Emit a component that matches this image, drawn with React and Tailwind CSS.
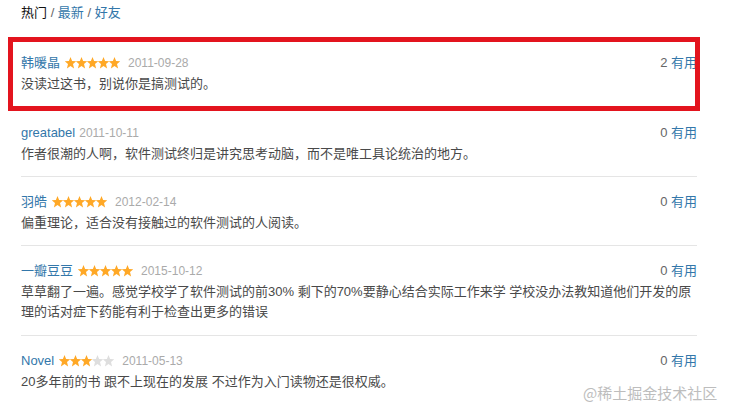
import React from 'react';

const reviews = [
  { name: '韩暖晶', stars: 5, date: '2011-09-28', text: '没读过这书，别说你是搞测试的。', useful: 2 },
  { name: 'greatabel', stars: 0, date: '2011-10-11', text: '作者很潮的人啊，软件测试终归是讲究思考动脑，而不是唯工具论统治的地方。', useful: 0 },
  { name: '羽皓', stars: 5, date: '2012-02-14', text: '偏重理论，适合没有接触过的软件测试的人阅读。', useful: 0 },
  {
    name: '一瓣豆豆',
    stars: 5,
    date: '2015-10-12',
    text: '草草翻了一遍。感觉学校学了软件测试的前30% 剩下的70%要静心结合实际工作来学 学校没办法教知道他们开发的原理的话对症下药能有利于检查出更多的错误',
    useful: 0,
  },
  { name: 'Novel', stars: 3, date: '2011-05-13', text: '20多年前的书 跟不上现在的发展 不过作为入门读物还是很权威。', useful: 0 },
];

const Stars = ({ count }) => (
  <svg width="55" height="12" viewBox="0 0 55 12" className="shrink-0">
    {[0, 1, 2, 3, 4].map((i) => (
      <polygon
        key={i}
        transform={`translate(${i * 11} 0)`}
        points="5.5,0 7.1,4 11.2,4.3 8,6.9 9.1,11.6 5.5,9.1 1.9,11.6 3,6.9 -0.2,4.3 3.9,4"
        fill={i < count ? '#ffa826' : '#dedede'}
      />
    ))}
  </svg>
);

export default function App() {
  return (
    <div
      className="relative w-[735px] h-[415px] overflow-hidden bg-white text-[13px] text-[#494949]"
      style={{ fontFamily: '"Liberation Sans", Arial, "Noto Sans CJK SC", sans-serif' }}
    >
      <div className="ml-[21px] w-[676px]">
        <div className="pt-[3px] leading-[20px] text-[13px]">
          <span className="text-[#111]">热门</span>
          <span className="text-[#666]"> / </span>
          <span className="text-[#3377aa]">最新</span>
          <span className="text-[#666]"> / </span>
          <span className="text-[#3377aa]">好友</span>
        </div>

        <div className="mt-[15px]">
          {reviews.map((r, idx) => (
            <div
              key={idx}
              className={`pt-[14px] ${idx === 0 || idx === 3 ? 'pb-[13px]' : 'pb-[12px]'} ${
                idx < reviews.length - 1 ? 'border-b border-[#e5e5e5]' : ''
              }`}
            >
              <div className="flex items-center h-[22px]">
                <span className="text-[#3377aa] text-[13px]">{r.name}</span>
                {r.stars > 0 ? (
                  <span className="ml-[5px] flex items-center">
                    <Stars count={r.stars} />
                  </span>
                ) : null}
                <span className={`${r.stars > 0 ? 'ml-[8px]' : 'ml-[4px]'} text-[12px] text-[#aaa]`}>{r.date}</span>
                <span className="ml-auto text-[13px]">
                  <span className="text-[#666]">{r.useful}</span>
                  <span className="text-[#3377aa]"> 有用</span>
                </span>
              </div>
              <p className="leading-[20px] text-[13px] text-[#494949]">{r.text}</p>
            </div>
          ))}
        </div>
      </div>

      {/* annotation box around first review */}
      <div className="absolute left-[8px] top-[37px] w-[692px] h-[74px] border-[5px] border-[#e3141e] pointer-events-none" />

      {/* watermark */}
      <div
        className="absolute left-[583px] top-[383px] text-[15px] leading-[20px] text-[#bdbdbd]"
        style={{ fontFamily: '"Noto Sans CJK SC", sans-serif' }}
      >
        @稀土掘金技术社区
      </div>
    </div>
  );
}
